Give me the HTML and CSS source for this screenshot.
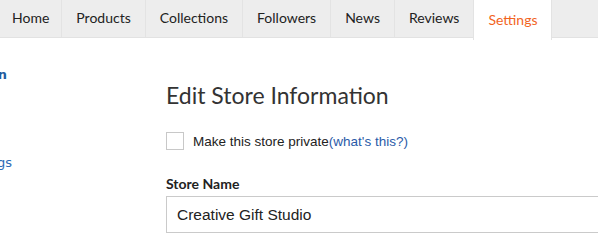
FILE: index.html
```html
<!DOCTYPE html>
<html lang="en">
<head>
  <meta charset="UTF-8">
  <title>Settings</title>
  <link rel="stylesheet" href="styles.css">
</head>
<body>
  <nav class="tabs">
    <a href="#" class="tab">Home</a>
    <a href="#" class="tab">Products</a>
    <a href="#" class="tab">Collections</a>
    <a href="#" class="tab">Followers</a>
    <a href="#" class="tab">News</a>
    <a href="#" class="tab">Reviews</a>
    <a href="#" class="tab active">Settings</a>
  </nav>

  <div class="page">
    <!-- サイドメニュー（左側は画面外にはみ出している） -->
    <aside class="side-menu">
      <a href="#" class="side-link current">Store Information</a>
      <a href="#" class="side-link second">Privacy Settings</a>
    </aside>

    <main class="content">
      <h1 class="title">Edit Store Information</h1>
      <label class="private-row">
        <span class="check-box"></span>
        <span>Make this store private</span><a href="#" class="help-link">(what's this?)</a>
      </label>
      <div class="field">
        <div class="field-label">Store Name</div>
        <div class="text-input">Creative Gift Studio</div>
      </div>
    </main>
  </div>
</body>
</html>
```

FILE: styles.css
```css
body {
  margin: 0;
  padding: 0;
  font-family: Lato, "Liberation Sans", Arial, sans-serif;
  color: #333;
  background: #fff;
  overflow: hidden;
}

.tabs {
  display: flex;
  height: 37px;
  background-color: #ededed;
  border-bottom: 1px solid #e2e2e2;
}

.tab {
  display: flex;
  align-items: center;
  padding: 0 14px 2px;
  border-right: 1px solid #e3e3e3;
  color: #222;
  font-size: 14px;
  text-decoration: none;
}

.tab:first-child {
  padding: 0 12px 2px;
}

.tab.active {
  background-color: #fff;
  color: #f2641e;
  height: 38px;
  padding: 0 14px 2px;
  border-left: 1px solid #e3e3e3;
  margin-left: -1px;
}

.page {
  display: flex;
}

/* 左メニューは画面の左端で切れている */
.side-menu {
  display: flex;
  flex-direction: column;
  flex: 0 0 auto;
  width: 566px;
  margin-left: -400px;
  padding-top: 29px;
}

.side-link {
  font-family: "DejaVu Sans", Verdana, sans-serif;
  font-size: 13px;
  color: #2d6bb5;
  text-decoration: none;
  text-align: right;
  white-space: nowrap;
  padding-right: 159px;
}

.side-link.current {
  font-weight: bold;
  color: #1f5d9e;
}

.side-link.second {
  margin-top: 73px;
  padding-right: 154px;
}

.content {
  padding-top: 43px;
  flex: 1;
}

.title {
  margin: 0 0 23px;
  font-size: 23px;
  font-weight: normal;
  color: #333;
}

.private-row {
  display: flex;
  align-items: center;
  font-family: "Liberation Sans", Arial, sans-serif;
  font-size: 13.5px;
  color: #222;
}

.check-box {
  width: 16px;
  height: 16px;
  border: 1px solid #c8c8c8;
  margin-right: 9px;
}

.help-link {
  color: #2a5ba8;
  text-decoration: none;
}

.field {
  margin-top: 25px;
}

.field-label {
  font-size: 14px;
  font-weight: bold;
  color: #222;
  margin-bottom: 4px;
}

.text-input {
  border: 1px solid #cacaca;
  border-right: none;
  height: 35px;
  line-height: 35px;
  padding-left: 10px;
  font-family: "Liberation Sans", Arial, sans-serif;
  font-size: 15.5px;
  color: #222;
}
```
